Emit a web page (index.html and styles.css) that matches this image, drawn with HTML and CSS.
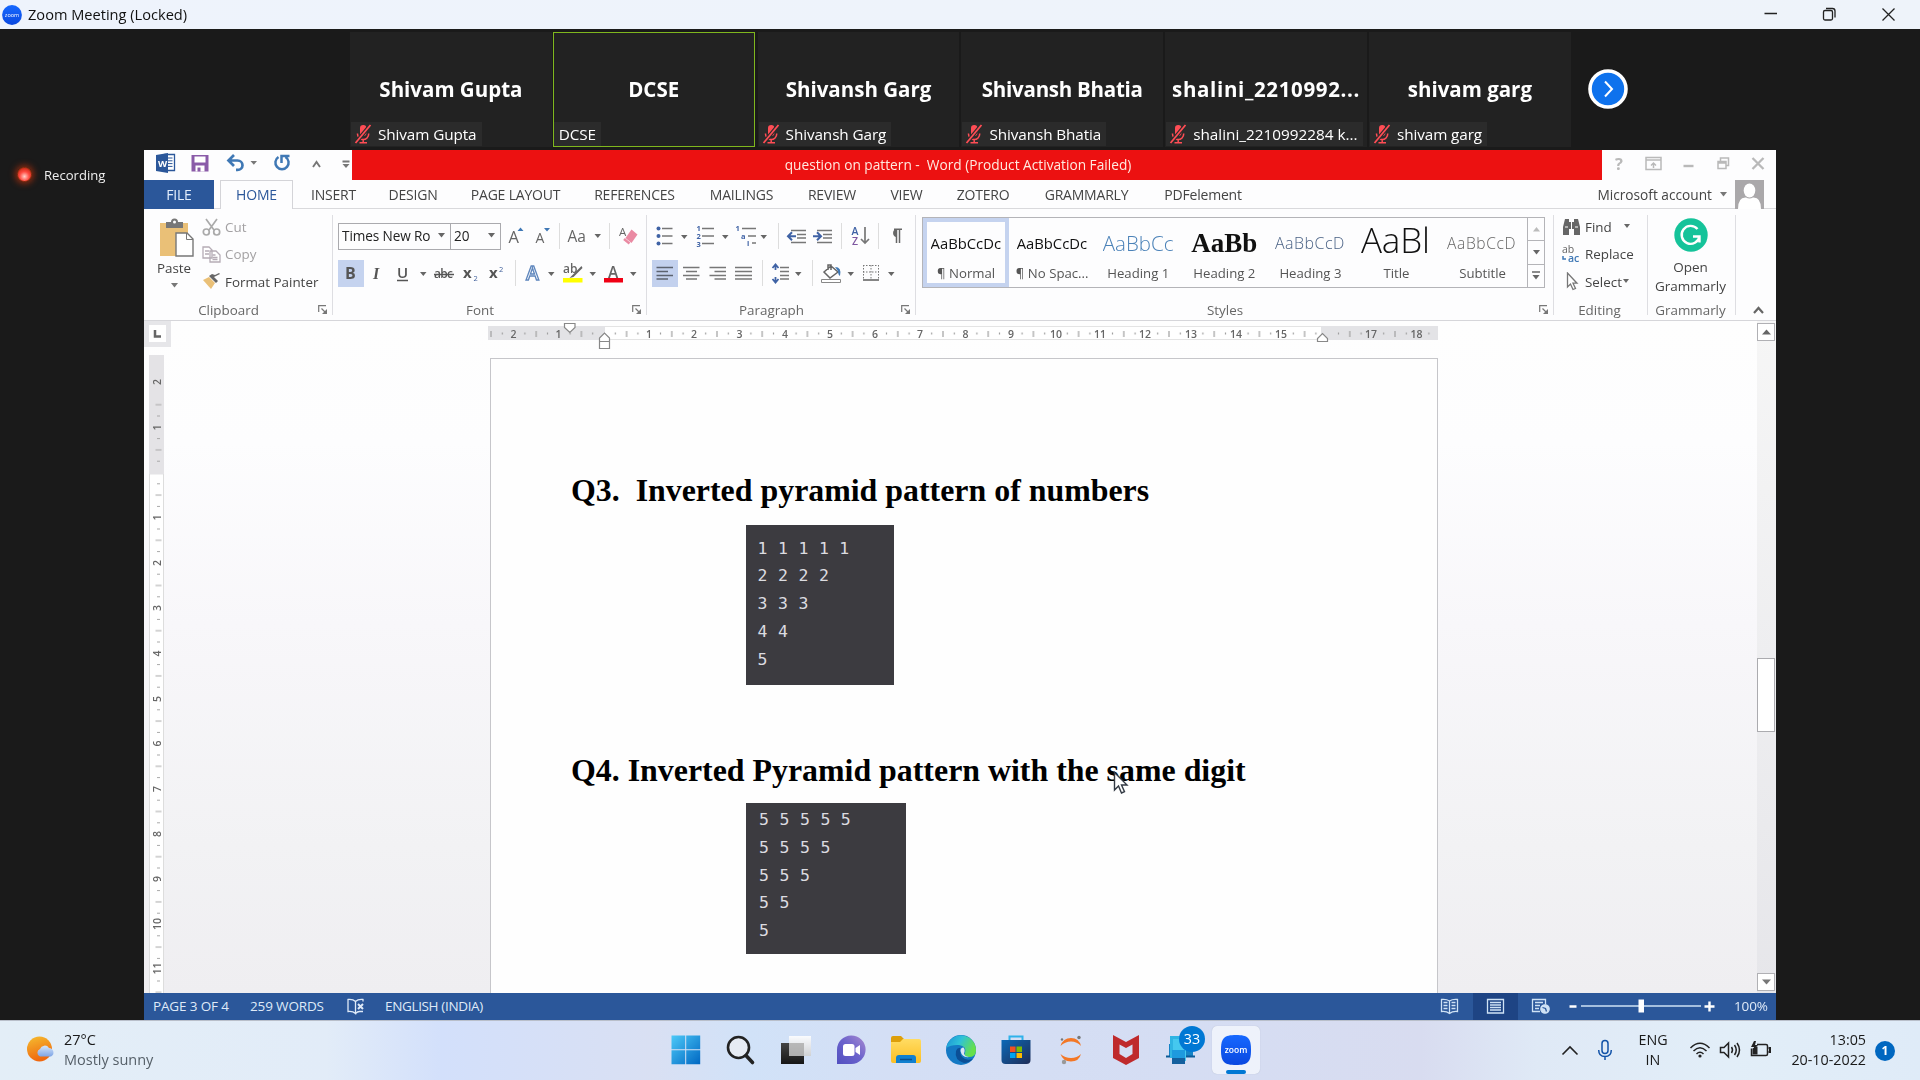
FILE: index.html
```html
<!DOCTYPE html>
<html lang="en">
<head>
<meta charset="utf-8">
<title>Zoom Meeting (Locked)</title>
<link rel="stylesheet" href="styles.css">
</head>
<body>
<svg class="defs" width="0" height="0">
  <defs>
    <symbol id="muted" viewBox="0 0 18 20">
      <rect x="6" y="1" width="6.4" height="11" rx="3.2" fill="#ff4d55"/>
      <path d="M3.500 9.500v.5a5.600 5.600 0 0 0 11.200 0v-.5M9.200 15.500v3M5.500 18.700h7.500" fill="none" stroke="#ff4d55" stroke-width="1.500"/>
      <path d="M1.500 19L16.500 1" stroke="#2b2b2b" stroke-width="4"/>
      <path d="M1.500 19L16.500 1" stroke="#ff4d55" stroke-width="1.800"/>
    </symbol>
    <symbol id="launch" viewBox="0 0 10 10"><path d="M.7 7V.7H8M3.500 3.500l4 4" fill="none" stroke="#777" stroke-width="1.200"/><path d="M9 4v5H4z" fill="#777"/></symbol>
    <linearGradient id="zoomBlue" x1="0" y1="0" x2="0" y2="1"><stop offset="0" stop-color="#1668ff"/><stop offset="1" stop-color="#0a48e0"/></linearGradient>
    <linearGradient id="winBlue" x1="0" y1="0" x2="1" y2="1"><stop offset="0" stop-color="#4cc9f8"/><stop offset="1" stop-color="#0067c2"/></linearGradient>
    <linearGradient id="chat" x1="1" y1="0" x2="0" y2="1"><stop offset="0" stop-color="#a98bd0"/><stop offset=".5" stop-color="#6a62cc"/><stop offset="1" stop-color="#5250c0"/></linearGradient>
    <linearGradient id="folder" x1="0" y1="0" x2="0" y2="1"><stop offset="0" stop-color="#ffdc63"/><stop offset="1" stop-color="#fcbf24"/></linearGradient>
    <linearGradient id="edgeTop" x1="0" y1="0" x2="1" y2=".4"><stop offset="0" stop-color="#1a8fd6"/><stop offset=".5" stop-color="#2fc2d8"/><stop offset="1" stop-color="#66e04a"/></linearGradient>
    <linearGradient id="store" x1="0" y1="0" x2="1" y2="1"><stop offset="0" stop-color="#0b69b8"/><stop offset="1" stop-color="#1f2d57"/></linearGradient>
    <linearGradient id="sun" x1="0" y1="0" x2=".3" y2="1"><stop offset="0" stop-color="#f5bd30"/><stop offset="1" stop-color="#f0680f"/></linearGradient>
    <linearGradient id="cloud" x1="0" y1="0" x2="0" y2="1"><stop offset="0" stop-color="#d5e6fb"/><stop offset="1" stop-color="#7fa5e6"/></linearGradient>
    <linearGradient id="tv1" x1="0" y1="0" x2="0" y2="1"><stop offset="0" stop-color="#444"/><stop offset="1" stop-color="#161616"/></linearGradient>
    <linearGradient id="tv2" x1="0" y1="0" x2="0" y2="1"><stop offset="0" stop-color="#fff"/><stop offset="1" stop-color="#d0d0d0"/></linearGradient>
    <pattern id="ticksH" x="604" y="326" width="45.200" height="14" patternUnits="userSpaceOnUse">
      <path d="M11.300 6.500v2M33.900 6.500v2M22.600 5v6" stroke="#a0a0a0" stroke-width="1.200"/>
    </pattern>
    <pattern id="ticksV" x="149" y="472.500" width="15" height="45.200" patternUnits="userSpaceOnUse">
      <path d="M8 11.300h3M8 33.900h3M6.500 22.600h6" stroke="#a8a8a8" stroke-width="1.100"/>
    </pattern>
  </defs>
</svg>

<header class="zoom-title">
  <svg width="20" height="20" viewBox="0 0 20 20"><circle cx="10" cy="10" r="9.900" fill="url(#zoomBlue)"/><text x="10" y="12" font-size="5.500" text-anchor="middle" fill="#fff">zoom</text></svg>
  <span class="zoom-name">Zoom Meeting (Locked)</span>
  <svg class="win-ctl" width="140" height="29" viewBox="1760 0 140 29" fill="none" stroke="#222" stroke-width="1.300">
    <path d="M1764.500 13.500h12.500M1882.500 8.500l12 12M1894.500 8.500l-12 12"/>
    <rect x="1823.500" y="10.500" width="9" height="9.500" rx="1.500"/><path d="M1826 8.500h6.500q2.500 0 2.500 2.500v6.500"/>
  </svg>
</header>

<main class="meeting">
  <section class="strip">
    <div class="tile"><b>Shivam Gupta</b><span class="tag"><svg width="18" height="20"><use href="#muted"/></svg>Shivam Gupta</span></div>
    <div class="tile speaking"><b>DCSE</b><span class="tag plain">DCSE</span></div>
    <div class="tile"><b>Shivansh Garg</b><span class="tag"><svg width="18" height="20"><use href="#muted"/></svg>Shivansh Garg</span></div>
    <div class="tile"><b class="tight">Shivansh Bhatia</b><span class="tag"><svg width="18" height="20"><use href="#muted"/></svg>Shivansh Bhatia</span></div>
    <div class="tile"><b class="long">shalini_2210992...</b><span class="tag wide"><svg width="18" height="20"><use href="#muted"/></svg>shalini_2210992284 k...</span></div>
    <div class="tile"><b>shivam garg</b><span class="tag"><svg width="18" height="20"><use href="#muted"/></svg>shivam garg</span></div>
    <svg class="next" width="40" height="40" viewBox="0 0 40 40"><circle cx="20" cy="20" r="18" fill="#0e72ed" stroke="#fff" stroke-width="3.600"/><path d="M17 12.500l7 7.500-7 7.500" fill="none" stroke="#fff" stroke-width="2"/></svg>
  </section>

  <div class="stage">
    <aside class="recording"><i></i>Recording</aside>

    <section class="word">
      <div class="word-title">
        <svg class="qat" width="208" height="30" viewBox="144 150 208 30">
          <path d="M165 154.500h9.500v16H165z" fill="#fff" stroke="#2b579a" stroke-width="1.300"/><path d="M168 158h4.500M168 160.800h4.500M168 163.600h4.500M168 166.400h4.500" stroke="#2b579a"/>
          <path d="M156 155l12-2v20l-12-2z" fill="#2b579a"/><text x="158" y="167" font-size="9.500" font-weight="700" fill="#fff">W</text>
          <path d="M191.500 155h17v16.500h-17z" fill="#8a5ba8"/><path d="M194.500 156.500h11v6h-11zM195.500 165.500h9v6h-9z" fill="#fff"/><path d="M197.500 167.500h3v4h-3z" fill="#8a5ba8"/>
          <path d="M229 160.500h8.500a5 4.700 0 0 1 0 9.400h-1.500M234 155l-5.500 5.500 5.500 5.500" fill="none" stroke="#3f78b5" stroke-width="2.700"/>
          <path d="M250.500 161h6.500l-3.200 3.800zM342.500 164h7l-3.500 4z" fill="#777"/>
          <path d="M278.500 157a6.600 6.600 0 1 0 7 0M281.500 163v-7h8" fill="none" stroke="#3f78b5" stroke-width="2.500"/>
          <path d="M313 167l3.500-5 3.500 5M342.500 161.500h7" fill="none" stroke="#777" stroke-width="1.900"/>
        </svg>
        <div class="red"><span>question on pattern -&nbsp; Word (Product Activation Failed)</span></div>
        <svg width="174" height="30" viewBox="1602 150 174 30" fill="none" stroke="#b9b9b9" stroke-width="1.500">
          <text x="1615" y="169.500" font-size="16.500" font-weight="700" fill="#b9b9b9" stroke="none">?</text>
          <path d="M1646 157.500h15v12h-15zM1646 160h15M1653.500 168v-5M1651 165.500l2.500-2.500 2.500 2.500"/>
          <path d="M1683.500 166h10" stroke-width="2.400"/>
          <path d="M1718 161.500h8v7h-8zM1718 163h8M1720.500 161v-3h8v7.500h-2.500"/>
          <path d="M1752.500 158l11 11M1763.500 158l-11 11" stroke-width="2.300"/>
        </svg>
      </div>

      <nav class="tabs">
        <span class="file">FILE</span><span class="home">HOME</span><span>INSERT</span><span>DESIGN</span><span>PAGE LAYOUT</span><span>REFERENCES</span><span>MAILINGS</span><span>REVIEW</span><span>VIEW</span><span>ZOTERO</span><span>GRAMMARLY</span><span>PDFelement</span>
        <div class="account">Microsoft account
          <svg width="7" height="5"><path d="M0 0h7L3.500 4.500z" fill="#777"/></svg>
          <svg width="29" height="29" viewBox="0 0 29 29"><path d="M0 0h29v29H0z" fill="#aaa8aa"/><ellipse cx="14.500" cy="10.500" rx="5.800" ry="7" fill="#fff"/><path d="M3 29q0-12 8-11.500 3.500 2 7 0 8-.5 8 11.500z" fill="#fff"/></svg>
        </div>
      </nav>

      <section class="ribbon">
        <div class="group">
          <div class="tools clipboard">
            <div class="paste">
              <svg width="35" height="40" viewBox="0 0 35 40"><path d="M1 5h28v33H1z" fill="#eac077"/><path d="M7 4h5a3.500 3.500 0 0 1 7 0h5v6H7z" fill="#777"/><circle cx="15.500" cy="4" r="1.500" fill="#fff"/><path d="M17 15h11l6 6v17H17z" fill="#fff" stroke="#777" stroke-width="1.400"/><path d="M27.500 15v6.500H34" fill="none" stroke="#777"/></svg>
              <span>Paste</span>
              <svg width="7" height="5"><path d="M0 0h7L3.500 4.500z" fill="#777"/></svg>
            </div>
            <div class="clip-list">
              <span class="off"><svg width="19" height="18" viewBox="0 0 19 18" fill="none" stroke="#aaa" stroke-width="1.700"><path d="M4 1l8 11M15 1L7 12"/><circle cx="4.300" cy="14" r="3"/><circle cx="14.700" cy="14" r="3"/></svg>Cut</span>
              <span class="off"><svg width="19" height="17" viewBox="0 0 19 17" fill="#fff" stroke="#b5acb5" stroke-width="1.300"><path d="M1 1h6l3 3v8H1zM8 5h6l4 4v7H8z"/><path d="M3 5h4M3 8h4M10.500 9h3M10.500 11.500h5M10.500 13.500h5"/></svg>Copy</span>
              <span><svg width="19" height="17" viewBox="0 0 19 17"><path d="M1 7l6-3 6 6-4 6z" fill="#eac077"/><path d="M7 3l7 7 2-2-4-4 6-3-1-1-4 2-3-1z" fill="#666"/></svg>Format Painter</span>
            </div>
          </div>
          <footer><span>Clipboard</span><svg width="10" height="10"><use href="#launch"/></svg></footer>
        </div>

        <div class="group font-group">
          <div class="tools">
            <div class="row">
              <div class="combo name">Times New Ro<svg width="7" height="5"><path d="M0 0h7L3.500 4.500z" fill="#666"/></svg></div>
              <div class="combo size">20<svg width="7" height="5"><path d="M0 0h7L3.500 4.500z" fill="#666"/></svg></div>
              <svg width="144" height="28" viewBox="501 223 144 28">
                <g fill="#666"><text x="508.500" y="243" font-size="16.500">A</text><text x="535.500" y="243" font-size="14">A</text><text x="567.500" y="242" font-size="15.500">Aa</text><path d="M594.500 234h6.500l-3.200 4z"/><text x="619" y="236" font-size="11.500">A</text></g>
                <path d="M517.500 231h6l-3-3.500zM544 228h6l-3 3.500z" fill="#3f78b5"/>
                <path d="M559.500 223v26M609.500 223v26" stroke="#ddd"/>
                <path d="M631.500 229.500l6 5-6 8.500-6-5z" fill="#ea8aa3"/><path d="M624 239l5.500 4.500" stroke="#ea8aa3" stroke-width="2.500"/>
              </svg>
            </div>
            <svg class="row2" width="308" height="28" viewBox="338 260 308 28">
              <path d="M338 260h26v27h-26z" fill="#c5d3ef"/>
              <g fill="#555"><text x="345" y="279" font-size="16" font-weight="700">B</text><text x="373" y="279" font-size="16" font-style="italic" class="serif" font-weight="700">I</text><text x="397" y="278" font-size="15" font-weight="600">U</text><text x="434" y="278" font-size="12" font-weight="600" textLength="19">abc</text><text x="463" y="278" font-size="15" font-weight="700">x</text><text x="489" y="278" font-size="15" font-weight="700">x</text></g>
              <path d="M397 280.500h11M434 274.500h20" stroke="#555" stroke-width="1.400"/>
              <text x="473.500" y="281" font-size="7.500" fill="#3f5f9a">2</text><text x="499" y="272" font-size="7.500" fill="#3f5f9a">2</text>
              <path d="M420 272h6.500l-3.200 4zM548 272h6.500l-3.200 4zM589.500 272h6.500l-3.200 4zM630 272h6.500l-3.200 4z" fill="#666"/>
              <path d="M515.500 260v26" stroke="#ddd"/>
              <text x="526" y="280" font-size="19.500" font-weight="600" fill="#fff" stroke="#5e86bd" stroke-width="1.300">A</text>
              <text x="563" y="273" font-size="12" font-weight="600" fill="#666">ab</text><path d="M581.500 266l-9 9-3 3 4-1 9-9z" fill="#666"/><path d="M563 278h19.500v4.500H563z" fill="#ff0"/>
              <text x="608" y="277.500" font-size="15.500" font-weight="600" fill="#666">A</text><path d="M604 278h19v4.500h-19z" fill="#f00014"/>
            </svg>
          </div>
          <footer><span>Font</span><svg width="10" height="10"><use href="#launch"/></svg></footer>
        </div>

        <div class="group">
          <svg class="tools para" width="268" height="73" viewBox="647 218 268 73">
            <g stroke="#777" stroke-width="1.500" fill="none">
              <path d="M662 228.500h10.500M662 236h10.500M662 243.500h10.500M702 228.500h12M702 236h12M702 243.500h12M742 228.500h14M748 236h8M752 243h4"/>
              <path d="M791 230.500h15M797 234.500h9M797 238h9M791 242.500h15M817 230.500h15M823 234.500h9M823 238h9M817 242.500h15"/>
              <path d="M656.500 267.500h16.500M656.500 271.500h11.500M656.500 275.500h16.500M656.500 279h11.500M683 267.500h16.500M686 271.500h11M683 275.500h16.500M686 279h11M709.500 267.500H726M714.500 271.500H726M709.500 275.500H726M714.500 279H726M735 267.500h17M735 271.500h17M735 275.500h17M735 279h17M780 267.500h9M780 271.500h9M780 275.500h9M780 279h9"/>
            </g>
            <path class="pressed" d="M652 260h26v27h-26z" fill="#c5d3ef"/>
            <g fill="#3f62a5"><circle cx="658.500" cy="228.500" r="2"/><circle cx="658.500" cy="236" r="2"/><circle cx="658.500" cy="243.500" r="2"/></g>
            <g font-size="7.500" font-weight="700" fill="#3f62a5"><text x="696.500" y="231">1</text><text x="696.500" y="238.500">2</text><text x="696.500" y="246.500">3</text><text x="735.500" y="231">1</text><text x="741" y="238.500">a</text><text x="747" y="246">i</text></g>
            <path d="M681 235h6.500l-3.200 4zM722 235h6.500l-3.200 4zM760.500 235h6.500l-3.200 4zM795 272h6.500l-3.200 4zM847.500 272h6.500l-3.200 4zM888 272h6.500l-3.200 4z" fill="#666"/>
            <path d="M778.500 223v26M841.500 223v26M878.500 223v26M762.500 260v26M812.500 260v26" stroke="#ddd"/>
            <path d="M796 236.300h-7M792 232.300l-4 4 4 4M813 236.300h7M817 232.300l4 4-4 4" fill="none" stroke="#3f62a5" stroke-width="2"/>
            <text x="851.500" y="234.500" font-size="10.500" fill="#3f62a5" font-weight="600">A</text><text x="852" y="245" font-size="10.500" fill="#7e57a0" font-weight="600">Z</text>
            <path d="M865 227v15M861 239l4 4 4-4" fill="none" stroke="#777" stroke-width="1.700"/>
            <path d="M896.500 243v-13.500M899.500 243v-13.500M894 229.200h8" stroke="#666" stroke-width="1.500"/><path d="M896 229v8a4.200 4.200 0 0 1 0-8z" fill="#666"/>
            <path d="M775.500 265v5M772.500 268l3-3.500 3 3.500M775.500 277v5M772.500 279l3 3.500 3-3.500" fill="none" stroke="#3f62a5" stroke-width="1.800"/>
            <path d="M831 266l7 6-8 6-6-6zM828 270v-5h3v5" fill="#fff" stroke="#666" stroke-width="1.500"/><path d="M835 267q7 0 5 9-2-1-2-5z" fill="#3f78b5"/><path d="M821.500 279.500h19v3h-19z" fill="#fff" stroke="#888"/>
            <path d="M863 265.500h16M863 272h16M863.500 265v14M871 265v14M878.500 265v14" stroke="#777" stroke-dasharray="1.500 1.500"/><path d="M863 280h16" stroke="#666" stroke-width="1.600"/>
          </svg>
          <footer><span>Paragraph</span><svg width="10" height="10"><use href="#launch"/></svg></footer>
        </div>

        <div class="group styles-group">
          <div class="gallery">
            <div class="style on"><em>AaBbCcDc</em><span>¶ Normal</span></div>
            <div class="style"><em>AaBbCcDc</em><span>¶ No Spac...</span></div>
            <div class="style"><em class="h1">AaBbCc</em><span>Heading 1</span></div>
            <div class="style"><em class="h2">AaBb</em><span>Heading 2</span></div>
            <div class="style"><em class="h3">AaBbCcD</em><span>Heading 3</span></div>
            <div class="style"><em class="ttl">AaBl</em><span>Title</span></div>
            <div class="style"><em class="sub">AaBbCcD</em><span>Subtitle</span></div>
            <div class="spin">
              <i><svg width="7" height="5"><path d="M0 4.500h7L3.500 0z" fill="#bbb"/></svg></i>
              <i><svg width="7" height="5"><path d="M0 0h7L3.500 4.500z" fill="#666"/></svg></i>
              <i><svg width="8" height="9"><path d="M0 1h8" stroke="#666" stroke-width="1.500"/><path d="M.5 4h7L4 8.500z" fill="#666"/></svg></i>
            </div>
          </div>
          <footer><span>Styles</span><svg width="10" height="10"><use href="#launch"/></svg></footer>
        </div>

        <div class="group">
          <div class="tools edit-list">
            <span><svg width="19" height="18" viewBox="0 0 19 18"><path d="M3 1h4v3h5V1h4l2 8v8h-6v-6H7v6H1V9z" fill="#666"/><path d="M9.500 4v7M3 9h3M13 9h3" stroke="#fff"/></svg>Find<svg class="car far" width="7" height="5"><path d="M0 0h6L3 4z" fill="#666"/></svg></span>
            <span><svg class="swap" width="19" height="22" viewBox="0 0 19 22"><text x="0" y="10" font-size="10.500" fill="#666">ab</text><text x="6" y="19" font-size="10.500" fill="#3f78b5" font-weight="600">ac</text><path d="M1 13v3h3" fill="none" stroke="#3f78b5" stroke-width="1.500"/></svg>Replace</span>
            <span><svg width="19" height="19" viewBox="0 0 19 19"><path d="M5.500 1v14l3-3 2.500 5.500 2.500-1-2.500-5.300h4z" fill="#fff" stroke="#777" stroke-width="1.300"/></svg>Select<svg class="car" width="7" height="5"><path d="M0 0h6L3 4z" fill="#666"/></svg></span>
          </div>
          <footer class="plain"><span>Editing</span></footer>
        </div>

        <div class="group">
          <div class="tools gram">
            <svg width="34" height="34" viewBox="0 0 34 34"><circle cx="17" cy="17" r="16.700" fill="#15c39a"/><path d="M23.500 11a9 9 0 1 0 2 7.500M19 18.500h6.500v6" fill="none" stroke="#fff" stroke-width="2.400"/></svg>
            <span>Open<br>Grammarly</span>
          </div>
          <footer class="plain"><span>Grammarly</span></footer>
        </div>
        <svg class="collapse" width="11" height="8" viewBox="0 0 11 8"><path d="M1 7l4.500-5L10 7" fill="none" stroke="#666" stroke-width="2.200"/></svg>
      </section>

      <section class="editor">
        <div class="left-rail">
          <div class="tabstop"><svg width="17" height="17"><path d="M6 5v6.500h6" fill="none" stroke="#666" stroke-width="2.500"/></svg></div>
          <svg class="vruler" width="16" height="638" viewBox="149 355 16 638">
            <path d="M149 355h15v638h-15z" fill="#fff"/><path d="M149 355h15v119.500h-15z" fill="#e4e3e6"/>
            <path d="M149 399h15v594h-15z" fill="url(#ticksV)"/><path d="M149.500 474v519M163.500 474v519" stroke="#ddd"/>
            <g class="digits">
              <text transform="translate(161 382) rotate(-90)">2</text><text transform="translate(161 427.500) rotate(-90)">1</text>
              <text transform="translate(161 517.500) rotate(-90)">1</text><text transform="translate(161 563) rotate(-90)">2</text><text transform="translate(161 608) rotate(-90)">3</text><text transform="translate(161 653.500) rotate(-90)">4</text><text transform="translate(161 699) rotate(-90)">5</text><text transform="translate(161 743.500) rotate(-90)">6</text><text transform="translate(161 789) rotate(-90)">7</text><text transform="translate(161 834) rotate(-90)">8</text><text transform="translate(161 879) rotate(-90)">9</text><text transform="translate(161 924) rotate(-90)">10</text><text transform="translate(161 968.500) rotate(-90)">11</text>
            </g>
          </svg>
        </div>

        <div class="canvas">
          <svg class="hruler" width="952" height="29" viewBox="488 321 952 29">
            <path d="M488 326h950v14H488z" fill="#fff"/><path d="M488 326.500h950M488 339.500h950" stroke="#e4e4e4"/>
            <path d="M488 326h117v14H488zM1321 326h117v14h-117z" fill="#e3e3e6"/>
            <path d="M488 326h950v14H488z" fill="url(#ticksH)"/>
            <g class="digits">
              <text x="513.500" y="337.500">2</text><text x="558.500" y="337.500">1</text><text x="649" y="337.500">1</text><text x="694" y="337.500">2</text><text x="739.500" y="337.500">3</text><text x="785" y="337.500">4</text><text x="830" y="337.500">5</text><text x="875" y="337.500">6</text><text x="920" y="337.500">7</text><text x="965.500" y="337.500">8</text><text x="1011" y="337.500">9</text><text x="1056" y="337.500">10</text><text x="1100" y="337.500">11</text><text x="1145" y="337.500">12</text><text x="1191" y="337.500">13</text><text x="1236" y="337.500">14</text><text x="1281" y="337.500">15</text><text x="1371" y="337.500">17</text><text x="1416.500" y="337.500">18</text>
            </g>
            <g fill="#fff" stroke="#888" stroke-width="1.200"><path d="M564.500 323.500h10.500v4l-5.200 5-5.300-5zM599.500 341.500v-3.500l5-5 5 5v3.500zM599.500 341.500h10v7h-10zM1317.500 341.500v-3l5-5 5 5v3z"/></g>
          </svg>
          <article class="page">
            <h2 class="q3">Q3.&nbsp; Inverted pyramid pattern of numbers</h2>
            <pre class="shot a">1 1 1 1 1
2 2 2 2
3 3 3
4 4
5</pre>
            <h2 class="q4">Q4. Inverted Pyramid pattern with the same digit</h2>
            <pre class="shot b">5 5 5 5 5
5 5 5 5
5 5 5
5 5
5</pre>
            <svg class="cursor" width="16" height="24" viewBox="0 0 16 24"><path d="M1.500 1.500v17.500l4-4 3 7 3-1.300-3-6.700h5.500z" fill="#fff" stroke="#333a44" stroke-width="1.400"/></svg>
          </article>
        </div>

        <div class="vscroll">
          <i class="btn"><svg width="9" height="6"><path d="M0 5.500h9L4.500 .5z" fill="#666"/></svg></i>
          <i class="thumb"></i>
          <i class="btn"><svg width="9" height="6"><path d="M0 .5h9L4.500 5.500z" fill="#777"/></svg></i>
        </div>
      </section>

      <footer class="status">
        <span class="s1">PAGE 3 OF 4</span><span class="s2">259 WORDS</span>
        <svg class="proof" width="18" height="17" viewBox="0 0 18 17" fill="none" stroke="#dfeaf8" stroke-width="1.300"><path d="M8.500 3.500Q6 1 1 1.500v12q5-.5 7.500 2zM8.500 3.500Q11 1 16 1.500v2M8.500 15.500q2-2 4-2h3.500"/><path d="M11 6l5 5M16 6l-5 5" stroke-width="2"/></svg>
        <span class="s3">ENGLISH (INDIA)</span>
        <svg class="views" width="290" height="27" viewBox="1430 993 290 27" fill="none" stroke="#cfe2f5" stroke-width="1.300">
          <path d="M1473 993h45v27h-45z" fill="#1e4484" stroke="none"/>
          <path d="M1449.500 1001q-3-2-8-1.500v12q5-.5 8 2 3-2.500 8-2v-12q-5-.5-8 1.500v12M1443.500 1002.500h4M1443.500 1005.500h4M1443.500 1008.500h4M1451.500 1002.500h4M1451.500 1005.500h4M1451.500 1008.500h4"/>
          <path d="M1487.500 999.500h16v13.500h-16zM1490 1002.500h11M1490 1005h11M1490 1007.500h11M1490 1010h11"/>
          <path d="M1540 1011.500h-7.500v-12h13v5M1535 1002.500h8M1535 1005.500h5M1535 1008.500h4"/><circle cx="1545" cy="1009" r="4.200" fill="#cfe2f5"/><path d="M1542.500 1007.500l3 1 1 3" stroke="#2b579a"/>
          <path d="M1569.500 1006.500h7M1704.500 1006.500h10M1709.500 1001.500v10" stroke="#fff" stroke-width="2.400"/><path d="M1581 1006h120"/><path d="M1638.500 999.500h5.500v13h-5.500z" fill="#fff" stroke="none"/>
        </svg>
        <span class="s4">100%</span>
      </footer>
    </section>
  </div>
</main>

<footer class="taskbar">
  <div class="weather">
    <svg width="30" height="30" viewBox="0 0 30 30"><circle cx="13.500" cy="14" r="12.500" fill="url(#sun)"/><path d="M14 22a4 4 0 0 1 0-7.500 5 5 0 0 1 9-1 4.500 4.500 0 0 1 2 8.500z" fill="url(#cloud)" transform="translate(0 -.5)"/></svg>
    <p>27°C<br><span>Mostly sunny</span></p>
  </div>
  <div class="apps">
    <i><svg width="32" height="32" viewBox="0 0 32 32"><path d="M1.500 1.500h13.700v13.700H1.500zM16.200 1.500h14v13.700h-14zM1.500 16.200h13.700v14H1.500zM16.200 16.200h14v14h-14z" fill="url(#winBlue)"/></svg></i>
    <i><svg width="32" height="32" viewBox="0 0 32 32" fill="none" stroke="#222"><circle cx="13.500" cy="13.500" r="10.500" fill="#e6ebf3" stroke-width="2.600"/><path d="M21 21.500l6.500 7" stroke-width="3.600" stroke-linecap="round"/></svg></i>
    <i><svg width="32" height="32" viewBox="0 0 32 32"><path d="M1 9h23v21H1z" fill="url(#tv1)"/><path d="M9 2h22v20H9z" fill="url(#tv2)" opacity=".88"/><path d="M9 9h15v13H9z" fill="#aaa" opacity=".7"/></svg></i>
    <i><svg width="32" height="32" viewBox="0 0 32 32"><path d="M2 30V16a14.300 14.300 0 1 1 14.300 14z" fill="url(#chat)"/><rect x="8" y="10" width="11.500" height="12" rx="2.500" fill="#fff"/><path d="M20.500 14l4.500-3v10l-4.500-3z" fill="#fff"/></svg></i>
    <i><svg width="32" height="32" viewBox="0 0 32 32"><path d="M1 4q0-2 2-2h8l3 3h-1v5H1z" fill="#dd9f0a"/><path d="M1 8h9l3-3h16q2 0 2 2v20q0 2-2 2H3q-2 0-2-2z" fill="url(#folder)"/><path d="M6 29v-5q0-3 3-3h14q3 0 3 3v5z" fill="#1080cf"/><path d="M10 25.500h12" stroke="#0a4f8c" stroke-width="1.500"/></svg></i>
    <i><svg width="32" height="32" viewBox="0 0 32 32"><circle cx="16" cy="16" r="15" fill="#1479c4"/><path d="M1.200 14A15 15 0 0 1 31 17q-.5 6-7 6-6-.5-4-4 2-7-6-8-8-.5-12.800 3z" fill="url(#edgeTop)"/><path d="M11 17q-2 9 8 12 5 0 9-4-12 3-13-8 .5-4-1-3-2 0-3 3z" fill="#0b4f96"/><path d="M15.500 17q0-3.500 3-3.500 2 2 .5 6 .5 3 5 3.500-7 1-8.500-6z" fill="#dbe4f4"/></svg></i>
    <i><svg width="32" height="32" viewBox="0 0 32 32"><path d="M9.500 7V2.500h13V7" fill="none" stroke="#2fb2ea" stroke-width="2"/><path d="M1.500 6h29v20q0 4-4 4h-21q-4 0-4-4z" fill="url(#store)"/><path d="M10 12.500h5.500V18H10z" fill="#f25022"/><path d="M16.500 12.500H22V18h-5.500z" fill="#7fba00"/><path d="M10 19h5.500v5H10z" fill="#00a4ef"/><path d="M16.500 19H22v5h-5.500z" fill="#ffb900"/></svg></i>
    <i><svg width="32" height="32" viewBox="0 0 32 32"><path d="M5.500 12Q8 4 16 4t10 8q-4-4.500-10-4.500T5.500 12zM5.500 20q2.500 7.500 10.500 7.500T26 20q-4 4-10 4t-10.500-4z" fill="#f37726"/><circle cx="24" cy="3.500" r="1.700" fill="#777"/><circle cx="7" cy="5.500" r="1.200" fill="#777"/><circle cx="9" cy="28" r="2.200" fill="#999"/></svg></i>
    <i><svg width="32" height="32" viewBox="0 0 32 32"><path d="M3 1l13 7 13-7v23l-13 7-13-7zM9.500 10.500V20l6.500 4 6.500-4v-9.500L16 14z" fill="#bf2a2c" fill-rule="evenodd"/></svg></i>
    <i class="phone"><svg width="32" height="32" viewBox="0 0 32 32"><path d="M4 10h24v12H4z" fill="#1684c6"/><path d="M1 21.500h29v2H1z" fill="#0b5b99"/><path d="M5 2h13v22H5z" fill="#2fb4e3"/><path d="M8 5h13v22H8z" fill="#45c8ef"/><path d="M7 16h13v14H7z" fill="#14609e"/><path d="M7 16h13v8H7z" fill="#1e9ade"/></svg><b>33</b></i>
    <i class="active"><svg width="32" height="32" viewBox="0 0 32 32"><path d="M16 1c12 0 15 3 15 15s-3 15-15 15S1 28 1 16 4 1 16 1z" fill="url(#zoomBlue)"/><text x="16" y="18.500" font-size="8.500" font-weight="600" text-anchor="middle" fill="#fff">zoom</text></svg></i>
  </div>
  <div class="tray">
    <svg width="60" height="59" viewBox="1560 1021 60 59" fill="none"><path d="M1562.500 1054.500l7.500-7.500 7.500 7.500" stroke="#222" stroke-width="1.600"/><rect x="1602" y="1040.500" width="6" height="13" rx="3" stroke="#1152a8" stroke-width="1.500"/><path d="M1598.700 1050q0 6.500 6.300 6.500t6.300-6.500M1605 1056.500v3.500" stroke="#1152a8" stroke-width="1.500"/></svg>
    <p class="lang">ENG<br>IN</p>
    <svg class="net" width="86" height="59" viewBox="1688 1021 86 59" fill="none" stroke="#222" stroke-width="1.500">
      <path d="M1690.500 1048q9.500-9.500 19 0M1693.500 1051q6.500-6.500 13 0M1696.500 1054q3.500-3.500 7 0"/><circle cx="1700" cy="1056" r="1.600" fill="#222" stroke="none"/>
      <path d="M1720.500 1047.500h3.500l4.500-4.500v14l-4.500-4.500h-3.500zM1731.500 1047q2 3 0 6M1734.500 1045q3.500 5 0 10M1737 1043q5 7 0 14"/>
      <path d="M1757 1044.500h9q1.500 0 1.500 1.500v8q0 1.500-1.500 1.500h-14.500v-7"/><path d="M1768.500 1048h1.500v4h-1.500" stroke-width="2"/><path d="M1752.500 1054.500v-6l5-2v8z" fill="#222" stroke="none"/><path d="M1754 1041l-3 6h3l-1 4 5-6h-3l1-4z" fill="#222" stroke="none"/>
    </svg>
    <p class="clock">13:05<br>20-10-2022</p>
    <b class="count">1</b>
  </div>
</footer>
</body>
</html>
```
FILE: styles.css
```css
* { box-sizing: border-box; }
body { margin: 0; width: 1920px; height: 1080px; overflow: hidden; display: flex; flex-direction: column; font-family: "Open Sans", "Noto Sans", sans-serif; font-size: 13.400px; color: #444; background: #1a1a1a; }
svg { display: block; flex: none; }
svg text { font-family: "Open Sans", "Noto Sans", sans-serif; }
svg text.serif { font-family: "Liberation Serif", serif; }
.defs { position: absolute; }
i, em { font-style: normal; }
p { margin: 0; }
span { white-space: nowrap; }

.zoom-title { height: 29px; flex: none; display: flex; align-items: center; background: linear-gradient(90deg, #eef3fc, #eef3fa); color: #111; font-size: 14.600px; padding: 0 20px 0 2px; }
.zoom-name { margin: 0 0 1px 6px; }
.win-ctl { margin-left: auto; }

.meeting { flex: 1; display: flex; flex-direction: column; background: #1a1a1a; }
.strip { height: 121px; padding: 3px 0 0 350px; display: flex; gap: 2px; color: #fff; }
.tile { width: 201.800px; height: 115px; background: #222; border: 1px solid #222; display: flex; flex-direction: column; justify-content: flex-end; }
.tile.speaking { border-color: #7fb71e; margin: 0 1px 0 -1px; }
.tile b { flex: 1; display: flex; align-items: flex-end; justify-content: center; font-size: 20.500px; line-height: 26px; padding-bottom: 20px; letter-spacing: 0; white-space: nowrap; }
.tile b.tight { letter-spacing: -.25px; }
.tile b.long { letter-spacing: .65px; }
.tag { align-self: flex-start; display: flex; align-items: center; height: 24px; background: #2b2b2b; font-size: 15.300px; padding: 0 5px 0 3px; gap: 6px; letter-spacing: -.1px; }
.tag.plain { padding-left: 5px; }
.tag.wide { letter-spacing: 0; }
.next { margin: 37px 0 0 15px; }

.stage { display: flex; height: 870px; }
.recording { width: 144px; padding: 12px 0 0 17px; display: flex; gap: 12px; height: 37px; align-items: center; color: #eee; font-size: 13.100px; }
.recording i { width: 15px; height: 15px; border: 1px solid #a2300f; border-radius: 50%; background: radial-gradient(circle at 50% 65%, #ffd0c8 0, #ff4a40 45%, #d22f1e 75%); box-shadow: 0 0 6px 2px #8c2b10; }

.word { width: 1632px; display: flex; flex-direction: column; background: #fdfdfe; }
.word-title { height: 30px; display: flex; flex: none; }
.red { flex: 1; background: #ec1111; color: #ffeae0; display: flex; align-items: center; justify-content: center; padding: 0 38px 1px 0; font-size: 13.700px; }

.tabs { height: 29px; flex: none; display: grid; grid-template-columns: 70px 81px 77px 82px 123px 115px 99px 82px 67px 86px 121px 112px 1fr; border-bottom: 1px solid #d9d9dc; font-size: 14px; letter-spacing: -.2px; line-height: 30px; text-align: center; }
.tabs .file { background: #2b579a; color: #e3eefc; height: 29px; }
.tabs .home { margin: 0 0 0 6px; width: 73px; border: 1px solid #d4d4d8; border-bottom: 0; background: #fdfdfe; color: #2b579a; height: 29px; line-height: 28px; }
.account { display: flex; justify-content: flex-end; align-items: center; gap: 8px; padding-right: 12px; height: 29px; letter-spacing: 0; white-space: nowrap; font-size: 13.700px; }

.ribbon { height: 112px; flex: none; display: grid; grid-template-columns: 189px 314px 269px 638px 94px 88px 1fr; border-bottom: 1px solid #d6d6da; padding-top: 6px; line-height: 18px; }
.group { height: 100px; border-right: 1px solid #dedee2; display: flex; flex-direction: column; }
.group footer { margin-top: auto; height: 14px; display: flex; padding-right: 4px; color: #666; align-items: flex-start; line-height: 18px; }
.group footer span { flex: 1; text-align: center; padding-right: 5px; }
.group footer.plain span { padding-right: 0; }
.group footer.plain { padding-right: 2px; }
.group footer svg { margin-top: 4px; }
.clipboard { display: flex; }
.paste { width: 50px; margin-left: 5px; padding-top: 3px; display: flex; flex-direction: column; align-items: center; line-height: 18px; }
.paste svg:first-child { margin-left: 4px; }
.paste span { margin-top: 1px; }
.paste span + svg { margin-top: 6px; }
.clip-list { display: grid; grid-auto-rows: 27.500px; margin: -2px 0 0 3px; }
.clip-list span { display: flex; align-items: center; gap: 4px; }
.off { color: #a3a1a3; }

.font-group .tools { padding: 8px 0 0 5px; }
.row { display: flex; height: 28px; }
.combo { height: 27px; border: 1px solid #aaaaae; display: flex; align-items: center; justify-content: space-between; color: #222; padding: 0 5px 2px 3px; white-space: nowrap; font-size: 13.600px; }
.combo.name { width: 113px; letter-spacing: -.1px; }
.combo.size { width: 51px; margin-left: -1px; }
.row2 { margin-top: 9px; }
.para { margin-top: 3px; }
.pressed { mix-blend-mode: multiply; }

.gallery { margin: 2px 8px 0 6px; height: 71px; border: 1px solid #b4b4b8; display: flex; }
.style { width: 86.100px; flex: none; display: flex; flex-direction: column; align-items: center; padding: 5px 0 0 0; overflow: hidden; color: #555; }
.style.on { border: 4px solid #c5d3ef; padding: 1px 0 0; }
.style em { height: 41px; line-height: 41px; width: 71px; overflow: hidden; white-space: nowrap; color: #111; font-size: 14.800px; }
.style span { font-size: 13.200px; line-height: 18px; }
.style em.h1 { color: #4b82b8; font-size: 20.500px; font-weight: 300; }
.style em.h2 { font: 700 27px/40px "Liberation Serif", serif; width: 70px; text-align: center; }
.style em.h3 { color: #4a6285; font-size: 16px; font-weight: 300; letter-spacing: .5px; }
.style em.ttl { font-size: 35px; font-weight: 300; line-height: 33px; letter-spacing: -.2px; }
.style em.sub { color: #666; font-size: 15.600px; font-weight: 300; letter-spacing: .6px; }
.spin { margin-left: auto; width: 17px; display: flex; flex-direction: column; border-left: 1px solid #b4b4b8; }
.spin i { flex: 1; display: flex; align-items: center; justify-content: center; }
.spin i + i { border-top: 1px solid #b4b4b8; }

.edit-list { display: grid; grid-auto-rows: 27.500px; padding-left: 8px; margin-top: -2px; }
.edit-list span { display: flex; align-items: center; gap: 4px; }
.swap { overflow: visible; }
.car { margin-left: -3px; }
.car.far { margin-left: 8px; }
.gram { display: flex; flex-direction: column; align-items: center; padding: 3px 2px 0 0; text-align: center; }
.gram span { line-height: 19px; margin-top: 6px; font-size: 13.500px; }
.collapse { margin: 91px 0 0 17px; }

.editor { flex: 1; min-height: 0; display: flex; background: linear-gradient(#fefefe 0, #fdfdfe 18%, #f8f7fa 45%, #f2f2f4 78%, #efeef1 100%); }
.left-rail { width: 27px; }
.tabstop { height: 26px; background: #e6e6e9; padding: 4px 0 0 5px; }
.tabstop svg { background: #fff; }
.vruler { margin: 8px 0 0 5px; }
.digits text { font: 600 10.500px "Open Sans", sans-serif; fill: #666; text-anchor: middle; }
.canvas { margin-left: 317px; width: 952px; flex: none; overflow: hidden; }
.page { position: relative; margin: 8px 0 0 2px; width: 948px; height: 640px; background: #fefefe; border: 1px solid #c6c6ca; color: #000; padding-left: 80px; }
.page h2 { margin: 0; font: 700 31.880px/36px "Liberation Serif", serif; white-space: nowrap; }
.page .q3 { padding-top: 114px; }
.shot { margin: 0 0 0 175px; background: #3c3b40; color: #dcdce0; font: 16.500px/27.800px "DejaVu Sans Mono", monospace; letter-spacing: .3px; }
.shot.a { margin-top: 16px; width: 148px; height: 160px; padding: 9.500px 0 0 11.500px; }
.shot.b { margin-top: 14px; width: 160px; height: 151px; padding: 3px 0 0 13px; }
.page .q4 { padding-top: 68px; }
.cursor { position: absolute; left: 622px; top: 412px; }
.vscroll { margin-left: auto; width: 19px; padding: 2px 1px 2px 0; display: flex; flex-direction: column; background: linear-gradient(#f6f6f6, #e6e6ea); }
.btn { height: 18px; border: 1px solid #b0b0b4; background: #fff; display: flex; align-items: center; justify-content: center; }
.thumb { margin: 317px 0 auto; height: 74px; border: 1px solid #ababaf; background: #fff; }

.status { height: 27px; flex: none; background: #2b579a; color: #dfeaf8; display: flex; align-items: center; padding: 0 0 1px 9px; font-size: 13.500px; letter-spacing: -.15px; }
.s1 { width: 97px; }
.s2 { width: 97px; }
.s3 { margin-left: 20px; letter-spacing: -.35px; }
.views { margin: 1px 0 0 auto; }
.s4 { width: 42px; margin: 0 0 0 14px; }

.taskbar { height: 60px; flex: none; border-top: 1px solid #b9bfca; display: flex; align-items: center; background: linear-gradient(90deg, #e3eef7 0, #e2ecf8 17%, #d3e0fb 23%, #d9e0f3 34%, #d1e2f8 39%, #d4dff5 46%, #d5ddf3 62%, #d8dcf0 74%, #dfe9f6 80%, #e2eef8 90%, #dfebf8 100%); color: #1a1a1a; font-size: 14.300px; line-height: 20px; }
.weather { width: 658px; padding-left: 26px; display: flex; align-items: center; gap: 8px; flex: none; }
.weather p { margin-bottom: 2px; font-size: 14.500px; }
.weather span { color: #555f68; }
.weather svg { margin-bottom: 2px; }
.apps { display: flex; margin-bottom: 1px; }
.apps i { width: 55px; height: 48px; display: flex; align-items: center; justify-content: center; position: relative; }
.apps svg { margin-left: 1px; }
.apps .active svg { margin-left: 0; }
.phone b { position: absolute; left: 26px; top: 0; width: 26px; height: 26px; border-radius: 50%; background: #0078d4; color: #fff; font-weight: 400; line-height: 26px; text-align: center; }
.apps .active { width: 48px; margin-left: 4px; background: #eef2fb; border-radius: 5px; box-shadow: 0 0 1px #a9b2c5; }
.active::after { content: ""; position: absolute; left: 14px; bottom: 0; width: 20px; height: 4px; border-radius: 2px; background: #0078d4; }
.tray { margin-left: auto; display: flex; align-items: center; padding-right: 25px; }
.lang { width: 66px; text-align: center; margin-bottom: 1px; }
.net { margin-left: 2px; }
.clock { width: 92px; text-align: right; margin-bottom: 2px; }
.count { width: 20px; height: 20px; border-radius: 50%; background: #0067c0; color: #fff; text-align: center; margin-left: 9px; font-size: 12px; }
```
